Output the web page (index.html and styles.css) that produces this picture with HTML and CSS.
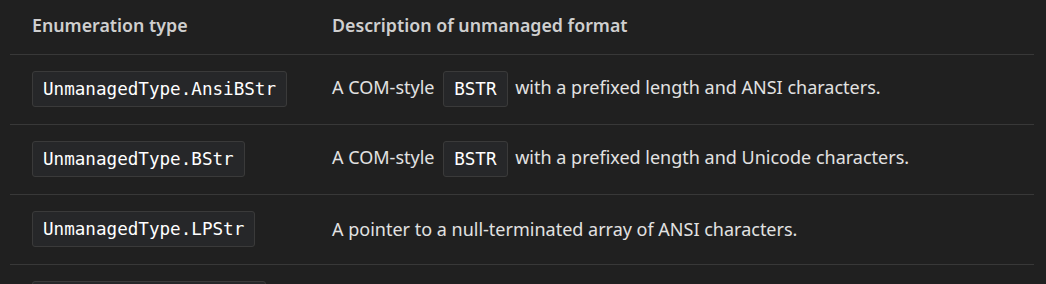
FILE: index.html
```html
<!DOCTYPE html>
<html lang="en">
<head>
<meta charset="utf-8">
<title>Unmanaged string types</title>
<link rel="stylesheet" href="styles.css">
</head>
<body>
<div class="wrap">
  <table class="enum-table">
    <thead>
      <tr>
        <th class="col-type">Enumeration type</th>
        <th>Description of unmanaged format</th>
      </tr>
    </thead>
    <tbody>
      <tr>
        <td><code>UnmanagedType.AnsiBStr</code></td>
        <td>A COM-style <code>BSTR</code> with a prefixed length and ANSI characters.</td>
      </tr>
      <tr>
        <td><code>UnmanagedType.BStr</code></td>
        <td>A COM-style <code>BSTR</code> with a prefixed length and Unicode characters.</td>
      </tr>
      <tr>
        <td><code>UnmanagedType.LPStr</code></td>
        <td>A pointer to a null-terminated array of ANSI characters.</td>
      </tr>
      <tr>
        <td><code>UnmanagedType.LPWStr</code></td>
        <td>A pointer to a null-terminated array of Unicode characters.</td>
      </tr>
    </tbody>
  </table>
</div>
</body>
</html>
```

FILE: styles.css
```css
html, body {
  margin: 0;
  padding: 0;
  background: #202020;
  overflow: hidden;
}

.wrap {
  padding: 0 12px 0 10px;
}

.enum-table {
  width: 1024px;
  border-collapse: collapse;
  table-layout: fixed;
  font-family: "Noto Sans", "Open Sans", sans-serif;
  font-size: 18px;
  color: #e2e2e2;
}

.enum-table th,
.enum-table td {
  box-sizing: border-box;
  text-align: left;
  padding: 16px 0 17px 22px;
  border-bottom: 1px solid #383838;
  vertical-align: middle;
}

.enum-table th {
  font-weight: 600;
  font-size: 17.8px;
  color: #cfcfcf;
  height: 54px;
  padding-top: 12px;
  padding-bottom: 15px;
}

.enum-table .col-type {
  width: 300px;
}

.enum-table td {
  height: 70px;
  line-height: 24px;
}

.enum-table code {
  display: inline-block;
  box-sizing: border-box;
  height: 36px;
  padding: 6px 10px;
  line-height: 22px;
  font-family: "DejaVu Sans Mono", "Liberation Mono", monospace;
  font-size: 17.6px;
  color: #ffffff;
  background: #262729;
  border: 1px solid #3a3a3a;
  border-radius: 3px;
  vertical-align: middle;
  margin: 0 3px 0 4px;
}

.enum-table td:first-child code {
  margin: 0;
}
```
